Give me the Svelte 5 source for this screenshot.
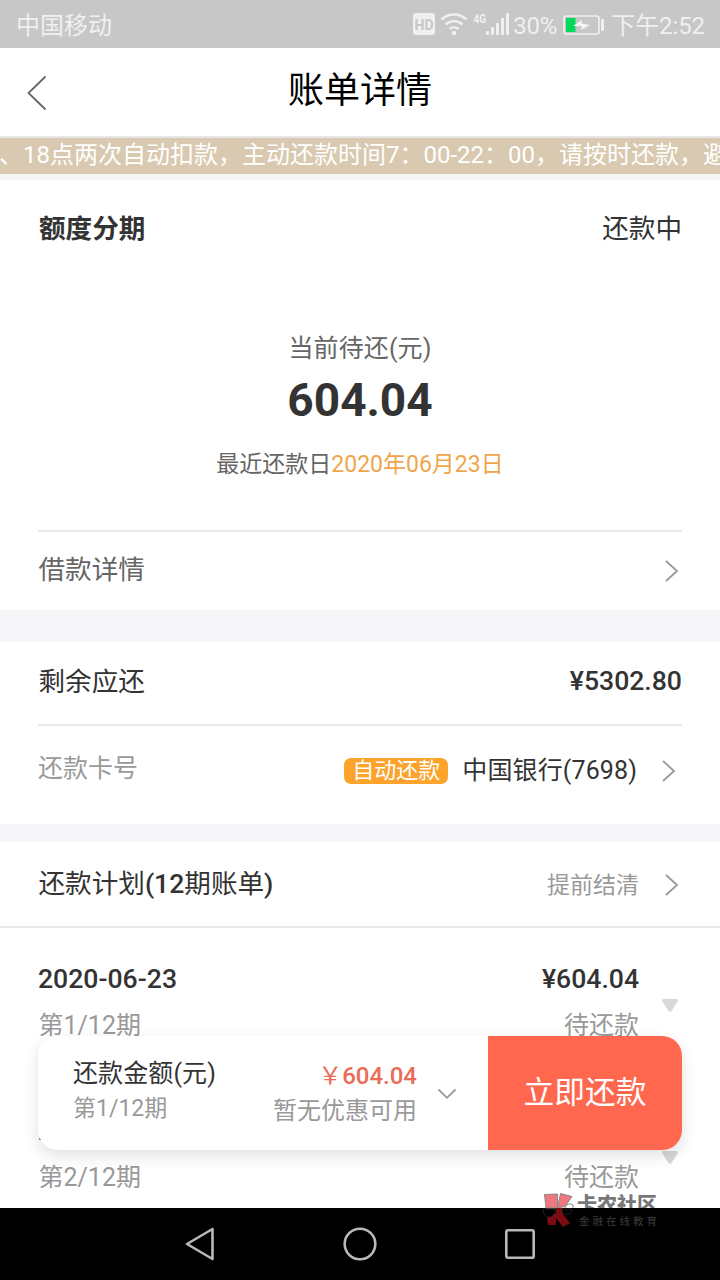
<script lang="ts">
	interface Bill {
		date: string;
		period: string;
		amount: string;
		status: string;
	}

	const bills: Bill[] = [
		{ date: '2020-06-23', period: '第1/12期', amount: '¥604.04', status: '待还款' },
		{ date: '2020-07-23', period: '第2/12期', amount: '¥604.04', status: '待还款' }
	];

	const notice = '、18点两次自动扣款，主动还款时间7：00-22：00，请按时还款，避免逾期';
</script>

{#snippet chevron()}
	<svg class="chevron" width="14" height="24" viewBox="0 0 14 24">
		<path d="M1 2l11 10L1 22" fill="none" stroke="#999" stroke-width="1.8" />
	</svg>
{/snippet}

<div class="screen">
	<div class="status">
		<span class="carrier">中国移动</span>
		<svg class="signals" width="98" height="30" viewBox="0 0 98 30">
			<rect x="0" y="2" width="22" height="22" rx="3" fill="#f0f0f0" />
			<text x="11" y="18.5" text-anchor="middle" font-size="14" font-weight="700" fill="#c7c7c7">HD</text>
			<g fill="none" stroke="#f0f0f0" stroke-width="2.4">
				<path d="M28.5 8.5a18 18 0 0 1 25 0" />
				<path d="M32.5 13.5a12.5 12.5 0 0 1 17 0" />
				<path d="M36.5 18a7 7 0 0 1 9 0" />
			</g>
			<circle cx="41" cy="22" r="2.3" fill="#f0f0f0" />
			<text x="60.5" y="12" font-size="13" font-weight="700" fill="#f0f0f0" textLength="12.5" lengthAdjust="spacingAndGlyphs">4G</text>
			<g fill="#f0f0f0">
				<rect x="73" y="20" width="3" height="4" rx="1" />
				<rect x="78" y="16" width="3" height="8" rx="1" />
				<rect x="83" y="12" width="3" height="12" rx="1" />
				<rect x="88" y="7" width="3" height="17" rx="1" />
				<rect x="93" y="2" width="3" height="22" rx="1" />
			</g>
		</svg>
		<span class="percent">30%</span>
		<svg class="battery" width="42" height="20" viewBox="0 0 42 20">
			<rect x="1" y="1" width="35" height="18" rx="2.5" fill="none" stroke="#f0f0f0" stroke-width="1.6" />
			<rect x="3" y="3" width="9.5" height="14" fill="#00d95a" />
			<path d="M10 11L19 5l-.5 3.5L27 10l-9 5 .8-3.8z" fill="#f5f5f5" />
			<rect x="38" y="4" width="3" height="12" rx="1" fill="#f0f0f0" />
		</svg>
		<span class="time">下午2:52</span>
	</div>

	<header class="header">
		<svg class="back" width="22" height="36" viewBox="0 0 22 36">
			<path d="M19.5 1.5L2.5 18l17 16.5" fill="none" stroke="#666" stroke-width="1.8" />
		</svg>
		<h1>账单详情</h1>
	</header>

	<div class="notice">{notice}</div>

	<section class="overview">
		<div class="overview-head">
			<strong>额度分期</strong>
			<span>还款中</span>
		</div>
		<div class="overview-body">
			<p class="label">当前待还(元)</p>
			<p class="total">604.04</p>
			<p class="due">最近还款日<em>2020年06月23日</em></p>
		</div>
		<div class="row detail">
			<span>借款详情</span>
			{@render chevron()}
		</div>
	</section>

	<section class="remain">
		<div class="row rest">
			<span>剩余应还</span>
			<b>¥5302.80</b>
		</div>
		<div class="row card">
			<span class="card-label">还款卡号</span>
			<span class="badge">自动还款</span>
			<span class="bank">中国银行(7698)</span>
			{@render chevron()}
		</div>
	</section>

	<section class="plan">
		<div class="plan-head">
			<span class="plan-title">还款计划<b>(12</b>期账单<b>)</b></span>
			<span class="settle">提前结清</span>
			{@render chevron()}
		</div>
		{#each bills as bill}
			<div class="bill">
				<div class="bill-left">
					<b>{bill.date}</b>
					<span>{bill.period}</span>
				</div>
				<div class="bill-right">
					<b>{bill.amount}</b>
					<span>{bill.status}</span>
				</div>
				<svg class="caret" width="18" height="16" viewBox="0 0 18 16">
					<path d="M2.5 2.5h13L9 12.5z" fill="#d8d8d8" stroke="#d8d8d8" stroke-width="3" stroke-linejoin="round" />
				</svg>
			</div>
		{/each}
	</section>

	<div class="paybar">
		<div class="pay-left">
			<span class="pay-title">还款金额(元)</span>
			<span class="pay-period">第1/12期</span>
		</div>
		<div class="pay-right">
			<span class="pay-amount"><i>￥</i>604.04</span>
			<span class="coupon">暂无优惠可用</span>
		</div>
		<svg class="down" width="20" height="12" viewBox="0 0 20 12">
			<path d="M1.5 1.5L10 9.8l8.5-8.3" fill="none" stroke="#999" stroke-width="1.8" />
		</svg>
		<button>立即还款</button>
	</div>

	<nav class="navbar">
		<svg width="32" height="36" viewBox="0 0 32 36">
			<path d="M28.5 3v30L3 18z" fill="none" stroke="#b8b8b8" stroke-width="2.6" stroke-linejoin="round" />
		</svg>
		<svg width="36" height="36" viewBox="0 0 36 36">
			<circle cx="18" cy="18" r="15.3" fill="none" stroke="#b8b8b8" stroke-width="2.6" />
		</svg>
		<svg width="32" height="32" viewBox="0 0 32 32">
			<rect x="2.3" y="2.3" width="27.4" height="27.4" rx="1.5" fill="none" stroke="#b8b8b8" stroke-width="2.6" />
		</svg>
	</nav>

	<div class="watermark">
		<svg width="32" height="36" viewBox="0 0 32 36">
			<path d="M2.5 2.5L15.5 2v14H4z" fill="#ee7780" stroke="#888" />
			<path d="M18.5 1.5L30 4.5l-7 10-7.5 1.5z" fill="#ee7780" stroke="#888" />
			<path d="M23 16c1-4 5-5 8-3v3" fill="#fff" stroke="#888" />
			<path d="M5 26l9-5v-5h6l1 6 7 9-7 4-7-9v7H6z" fill="#7c0b12" />
			<path d="M1 17h12c0 11-12 11-12 0z" fill="#000" stroke="#2a2a2a" stroke-width=".8" />
			<path d="M20 17h10c1 5-6 8-10 3z" fill="#000" stroke="#2a2a2a" stroke-width=".8" />
		</svg>
		<div class="mark-text">
			<strong>卡农社区</strong>
			<small>金融在线教育</small>
		</div>
	</div>
</div>

<style>
	:global(body) {
		margin: 0;
		background: #fff;
	}

	.screen {
		position: relative;
		width: 720px;
		height: 1280px;
		overflow: hidden;
		background: #fff;
		color: #333;
		font-family: Roboto, 'Noto Sans CJK SC', sans-serif;
		font-size: 26.6px;
		line-height: 40px;
	}

	svg {
		display: block;
		flex-shrink: 0;
	}

	b {
		font-weight: 500;
	}

	.status {
		display: flex;
		align-items: center;
		height: 48px;
		box-sizing: border-box;
		padding: 4px 15px 0 16px;
		background: #c7c7c7;
		color: #f0f0f0;
		font-size: 24px;
	}

	.carrier {
		flex: 1;
	}

	.percent {
		margin-left: 2px;
		width: 50px;
		letter-spacing: -0.3px;
	}

	.battery {
		margin: -2px 6px 0 0;
	}

	.time {
		letter-spacing: -0.1px;
	}

	.header {
		display: flex;
		align-items: center;
		height: 88px;
		padding: 0 26px;
		border-bottom: 2px solid #e6e6e8;
	}

	.back {
		margin-top: 2px;
	}

	h1 {
		flex: 1;
		margin: 0 22px 2px 0;
		color: #000;
		font-size: 36px;
		font-weight: 400;
		text-align: center;
	}

	.notice {
		height: 36px;
		line-height: 34px;
		text-indent: -1px;
		overflow: hidden;
		white-space: nowrap;
		background: #d8c9b0;
		border-bottom: 6px solid #f6f6f8;
		color: #fff;
		font-size: 24px;
	}

	.overview {
		border-bottom: 32px solid #f6f6f9;
	}

	.overview-head {
		display: flex;
		justify-content: space-between;
		align-items: center;
		box-sizing: border-box;
		height: 98px;
		padding: 0 38px 0 39px;
	}

	.overview-body {
		height: 202px;
		padding-top: 50px;
		text-align: center;
	}

	p {
		margin: 0;
	}

	.label {
		color: #666;
		font-size: 25px;
		line-height: 42px;
		letter-spacing: 0.1px;
	}

	.total {
		font-size: 46px;
		font-weight: 700;
		line-height: 60px;
	}

	.due {
		color: #666;
		font-size: 23px;
		line-height: 70px;
	}

	.due em {
		color: #f0a54c;
		font-style: normal;
	}

	.row {
		display: flex;
		align-items: center;
		justify-content: space-between;
		box-sizing: border-box;
		margin: 0 38px;
	}

	.detail {
		height: 80px;
		border-top: 2px solid #e8e8e8;
		color: #666;
	}

	.detail span {
		padding: 0 0 3px 0.5px;
	}

	.detail .chevron {
		margin-right: 3px;
	}

	.remain {
		border-bottom: 18px solid #f6f6f9;
	}

	.rest {
		height: 84px;
		padding-bottom: 4px;
		border-bottom: 2px solid #e8e8e8;
	}

	.rest span {
		padding: 1px 0 0 0.5px;
	}

	.card {
		height: 98px;
		padding-bottom: 8px;
		font-size: 25px;
	}

	.card-label {
		flex: 1;
		margin-bottom: 4px;
		color: #999;
	}

	.badge {
		width: 104px;
		height: 26px;
		margin-right: 14px;
		border-radius: 7px;
		background: #fca32c;
		color: #fff;
		font-size: 22px;
		line-height: 26px;
		text-align: center;
	}

	.bank {
		letter-spacing: 0.12px;
	}

	.card .chevron {
		margin: 0 6px 0 25px;
	}

	.plan-head {
		display: flex;
		align-items: center;
		height: 84px;
		padding: 0 41px 0 38.5px;
		border-bottom: 2px solid #e8e8e8;
	}

	.plan-title {
		flex: 1;
	}

	.settle {
		margin: 3px 26px 0 0;
		color: #999;
		font-size: 23px;
	}

	.plan-head .chevron {
		margin-top: 2px;
	}

	.bill {
		display: flex;
		box-sizing: border-box;
		height: 152px;
		padding: 28px 41px 0 38px;
		line-height: 46px;
	}

	.bill-left,
	.bill-right {
		display: flex;
		flex-direction: column;
	}

	.bill-left {
		flex: 1;
	}

	.bill-right {
		text-align: right;
	}

	.bill span {
		color: #999;
		font-size: 25px;
		line-height: 48px;
	}

	.bill-left span {
		padding-left: 0.5px;
	}

	.caret {
		margin: 42px 0 0 22px;
	}

	.paybar {
		position: absolute;
		left: 38px;
		top: 1036px;
		display: flex;
		width: 644px;
		height: 114px;
		border-radius: 20px;
		overflow: hidden;
		background: #fff;
		box-shadow: 0 6px 16px rgba(0, 0, 0, 0.12);
	}

	.pay-left,
	.pay-right {
		display: flex;
		flex-direction: column;
		line-height: 35px;
	}

	.pay-left {
		flex: 1;
		padding: 20px 0 0 35px;
	}

	.pay-title {
		font-size: 25px;
		letter-spacing: 0.1px;
	}

	.pay-period {
		color: #999;
		font-size: 23px;
	}

	.pay-right {
		padding-top: 23px;
		font-size: 24px;
		text-align: right;
	}

	.pay-amount {
		color: #ea6c58;
		font-weight: 500;
	}

	.pay-amount i {
		font-style: normal;
		font-weight: 400;
	}

	.coupon {
		color: #999;
	}

	.down {
		margin: 52px 31px 0 20px;
	}

	button {
		width: 194px;
		padding: 0 0 1px;
		border: 0;
		background: #ff674f;
		color: #fff;
		font: inherit;
		font-size: 30.7px;
	}

	.navbar {
		position: absolute;
		left: 0;
		bottom: 0;
		display: flex;
		align-items: center;
		justify-content: center;
		gap: 126px;
		width: 720px;
		height: 72px;
		background: #000;
	}

	.watermark {
		position: absolute;
		left: 542px;
		top: 1192px;
		display: flex;
		gap: 3px;
	}

	.mark-text {
		display: flex;
		flex-direction: column;
		white-space: nowrap;
	}

	.mark-text strong {
		color: rgba(0, 0, 0, 0.55);
		font-size: 20px;
		font-weight: 900;
		line-height: 26px;
	}

	.mark-text small {
		padding-left: 2px;
		color: #3c3c3c;
		font-size: 10.5px;
		letter-spacing: 3px;
		line-height: 7px;
	}
</style>
